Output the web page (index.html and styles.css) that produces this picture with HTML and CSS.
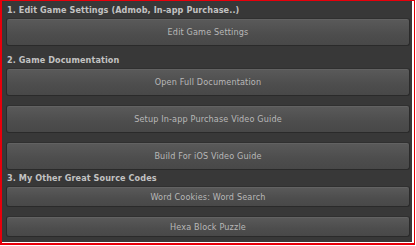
FILE: index.html
```html
<!DOCTYPE html>
<html>
<head>
<meta charset="utf-8">
<link rel="stylesheet" href="styles.css">
</head>
<body>
<div class="frame">
  <div class="panel">
    <div class="label">1. Edit Game Settings (Admob, In-app Purchase..)</div>
    <div class="btn tall">Edit Game Settings</div>
    <div class="label sep">2. Game Documentation</div>
    <div class="btn tall">Open Full Documentation</div>
    <div class="btn tall gap">Setup In-app Purchase Video Guide</div>
    <div class="btn tall gap">Build For iOS Video Guide</div>
    <div class="label">3. My Other Great Source Codes</div>
    <div class="btn short">Word Cookies: Word Search</div>
    <div class="btn short gap">Hexa Block Puzzle</div>
  </div>
</div>
</body>
</html>
```

FILE: styles.css
```css
html, body {
  margin: 0;
  padding: 0;
  background: #ffffff;
}
.frame {
  width: 412px;
  height: 242px;
  border-left: 2px solid #e8000b;
  border-top: 1px solid #e8000b;
  border-right: 1px solid #e8000b;
  border-bottom: 2px solid #e8000b;
  background: #ffffff;
}
.panel {
  width: 404px;
  height: 240px;
  margin-right: 2px;
  background: #383838;
  padding: 1px 2px 0 4px;
  display: flex;
  flex-direction: column;
  font-family: "DejaVu Sans Condensed", "DejaVu Sans", Verdana, sans-serif;
  font-stretch: condensed;
}
.label {
  height: 16px;
  line-height: 16px;
  padding-left: 1px;
  font-size: 9px;
  font-weight: bold;
  color: #c2c2c2;
  letter-spacing: 0.1px;
  white-space: nowrap;
}
.label.sep {
  margin-top: 6px;
}
.btn {
  box-sizing: border-box;
  border: 1px solid #2a2a2a;
  border-top-color: #303030;
  border-radius: 3px;
  background: linear-gradient(#5a5a5a, #4d4d4d 60%, #484848);
  box-shadow: inset 0 1px 0 #626262;
  color: #b8b8b8;
  font-size: 9px;
  letter-spacing: 0.15px;
  display: flex;
  align-items: center;
  justify-content: center;
  white-space: nowrap;
}
.btn.tall {
  height: 28px;
}
.btn.short {
  height: 21px;
}
.btn.gap {
  margin-top: 9px;
}
```
